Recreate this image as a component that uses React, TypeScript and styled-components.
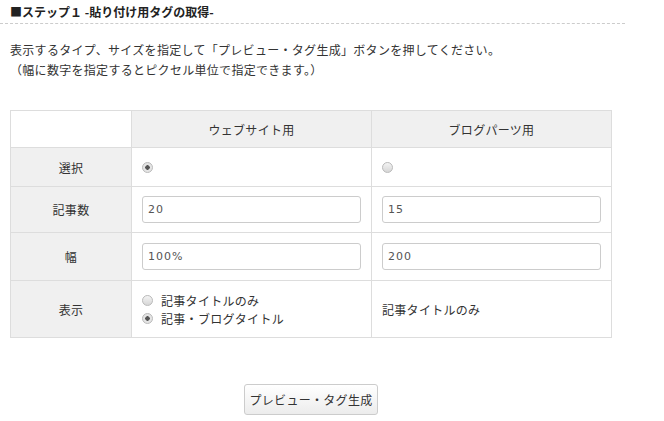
import React from "react";
import styled, { createGlobalStyle } from "styled-components";

const Global = createGlobalStyle`
  html, body { margin: 0; padding: 0; background: #fff; }
  body { font-family: "Noto Sans CJK JP", "Noto Sans", sans-serif; color: #333; font-size: 12px; }
`;

const Page = styled.div`
  width: 625px;
`;

const Heading = styled.h2`
  margin: 0;
  height: 24px;
  box-sizing: border-box;
  padding: 3px 0 0 10px;
  font-size: 12px;
  line-height: 18px;
  font-weight: bold;
  color: #222;
  border-bottom: 1px dashed #ccc;
`;

const Intro = styled.p`
  margin: 16px 0 0 0;
  padding-left: 10px;
  font-size: 12px;
  line-height: 20px;
  letter-spacing: 0.3px;
  color: #333;
`;

const Body = styled.div`
  padding-left: 10px;
  width: 602px;
  margin-top: 30px;
`;

const Table = styled.table`
  width: 602px;
  border-collapse: collapse;
  table-layout: fixed;
`;

const Th = styled.th`
  background: #f0f0f0;
  border: 1px solid #ddd;
  font-weight: normal;
  font-size: 12px;
  color: #333;
  padding: 0;
  text-align: center;
  letter-spacing: 0.3px;
`;

const Corner = styled.th`
  background: #fff;
  border: 1px solid #ddd;
  width: 120px;
  padding: 0;
`;

const Row = styled.tr<{ $h: number }>`
  height: ${(p) => p.$h}px;
`;

const Td = styled.td`
  border: 1px solid #ddd;
  padding: 0 10px;
  font-size: 12px;
  color: #333;
  vertical-align: middle;
  letter-spacing: 0.3px;
`;

const Input = styled.input`
  box-sizing: border-box;
  width: 100%;
  height: 27px;
  border: 1px solid #ccc;
  border-radius: 3px;
  padding: 0 5px;
  font-family: "DejaVu Sans", sans-serif;
  font-size: 11px;
  color: #555;
  letter-spacing: 1px;
  background: #fff;
  outline: none;
`;

const Radio = styled.span<{ $on?: boolean }>`
  display: inline-block;
  flex: none;
  box-sizing: border-box;
  width: 11px;
  height: 11px;
  border-radius: 50%;
  border: 1px solid #bbb;
  background: ${(p) =>
    p.$on
      ? "radial-gradient(circle, #555 0 2px, #e4e4e4 2.5px)"
      : "linear-gradient(#f4f4f4, #d6d6d6)"};
  vertical-align: middle;
`;

const OptionList = styled.div`
  display: flex;
  flex-direction: column;
`;

const Option = styled.label`
  display: flex;
  align-items: center;
  gap: 8px;
  height: 18px;
`;

const RadioCell = styled.div`
  display: flex;
  align-items: center;
`;

const Actions = styled.div`
  display: flex;
  justify-content: center;
  margin-top: 46px;
`;

const Button = styled.button`
  width: 134px;
  height: 31px;
  border: 1px solid #ccc;
  border-radius: 3px;
  background: linear-gradient(#ffffff, #ececec);
  font-family: "Noto Sans CJK JP", sans-serif;
  font-size: 12px;
  letter-spacing: 0.3px;
  color: #333;
  padding: 0;
`;

export default function App() {
  return (
    <Page>
      <Global />
      <Heading>■ステップ１ -貼り付け用タグの取得-</Heading>
      <Intro>
        表示するタイプ、サイズを指定して「プレビュー・タグ生成」ボタンを押してください。
        <br />
        （幅に数字を指定するとピクセル単位で指定できます。）
      </Intro>
      <Body>
        <Table>
          <thead>
            <Row $h={37}>
              <Corner />
              <Th>ウェブサイト用</Th>
              <Th>ブログパーツ用</Th>
            </Row>
          </thead>
          <tbody>
            <Row $h={39}>
              <Th>選択</Th>
              <Td>
                <RadioCell>
                  <Radio $on />
                </RadioCell>
              </Td>
              <Td>
                <RadioCell>
                  <Radio />
                </RadioCell>
              </Td>
            </Row>
            <Row $h={46}>
              <Th>記事数</Th>
              <Td>
                <Input defaultValue="20" />
              </Td>
              <Td>
                <Input defaultValue="15" />
              </Td>
            </Row>
            <Row $h={48}>
              <Th>幅</Th>
              <Td>
                <Input defaultValue="100%" />
              </Td>
              <Td>
                <Input defaultValue="200" />
              </Td>
            </Row>
            <Row $h={57}>
              <Th>表示</Th>
              <Td>
                <OptionList>
                  <Option>
                    <Radio />
                    記事タイトルのみ
                  </Option>
                  <Option>
                    <Radio $on />
                    記事・ブログタイトル
                  </Option>
                </OptionList>
              </Td>
              <Td>記事タイトルのみ</Td>
            </Row>
          </tbody>
        </Table>
        <Actions>
          <Button>プレビュー・タグ生成</Button>
        </Actions>
      </Body>
    </Page>
  );
}
